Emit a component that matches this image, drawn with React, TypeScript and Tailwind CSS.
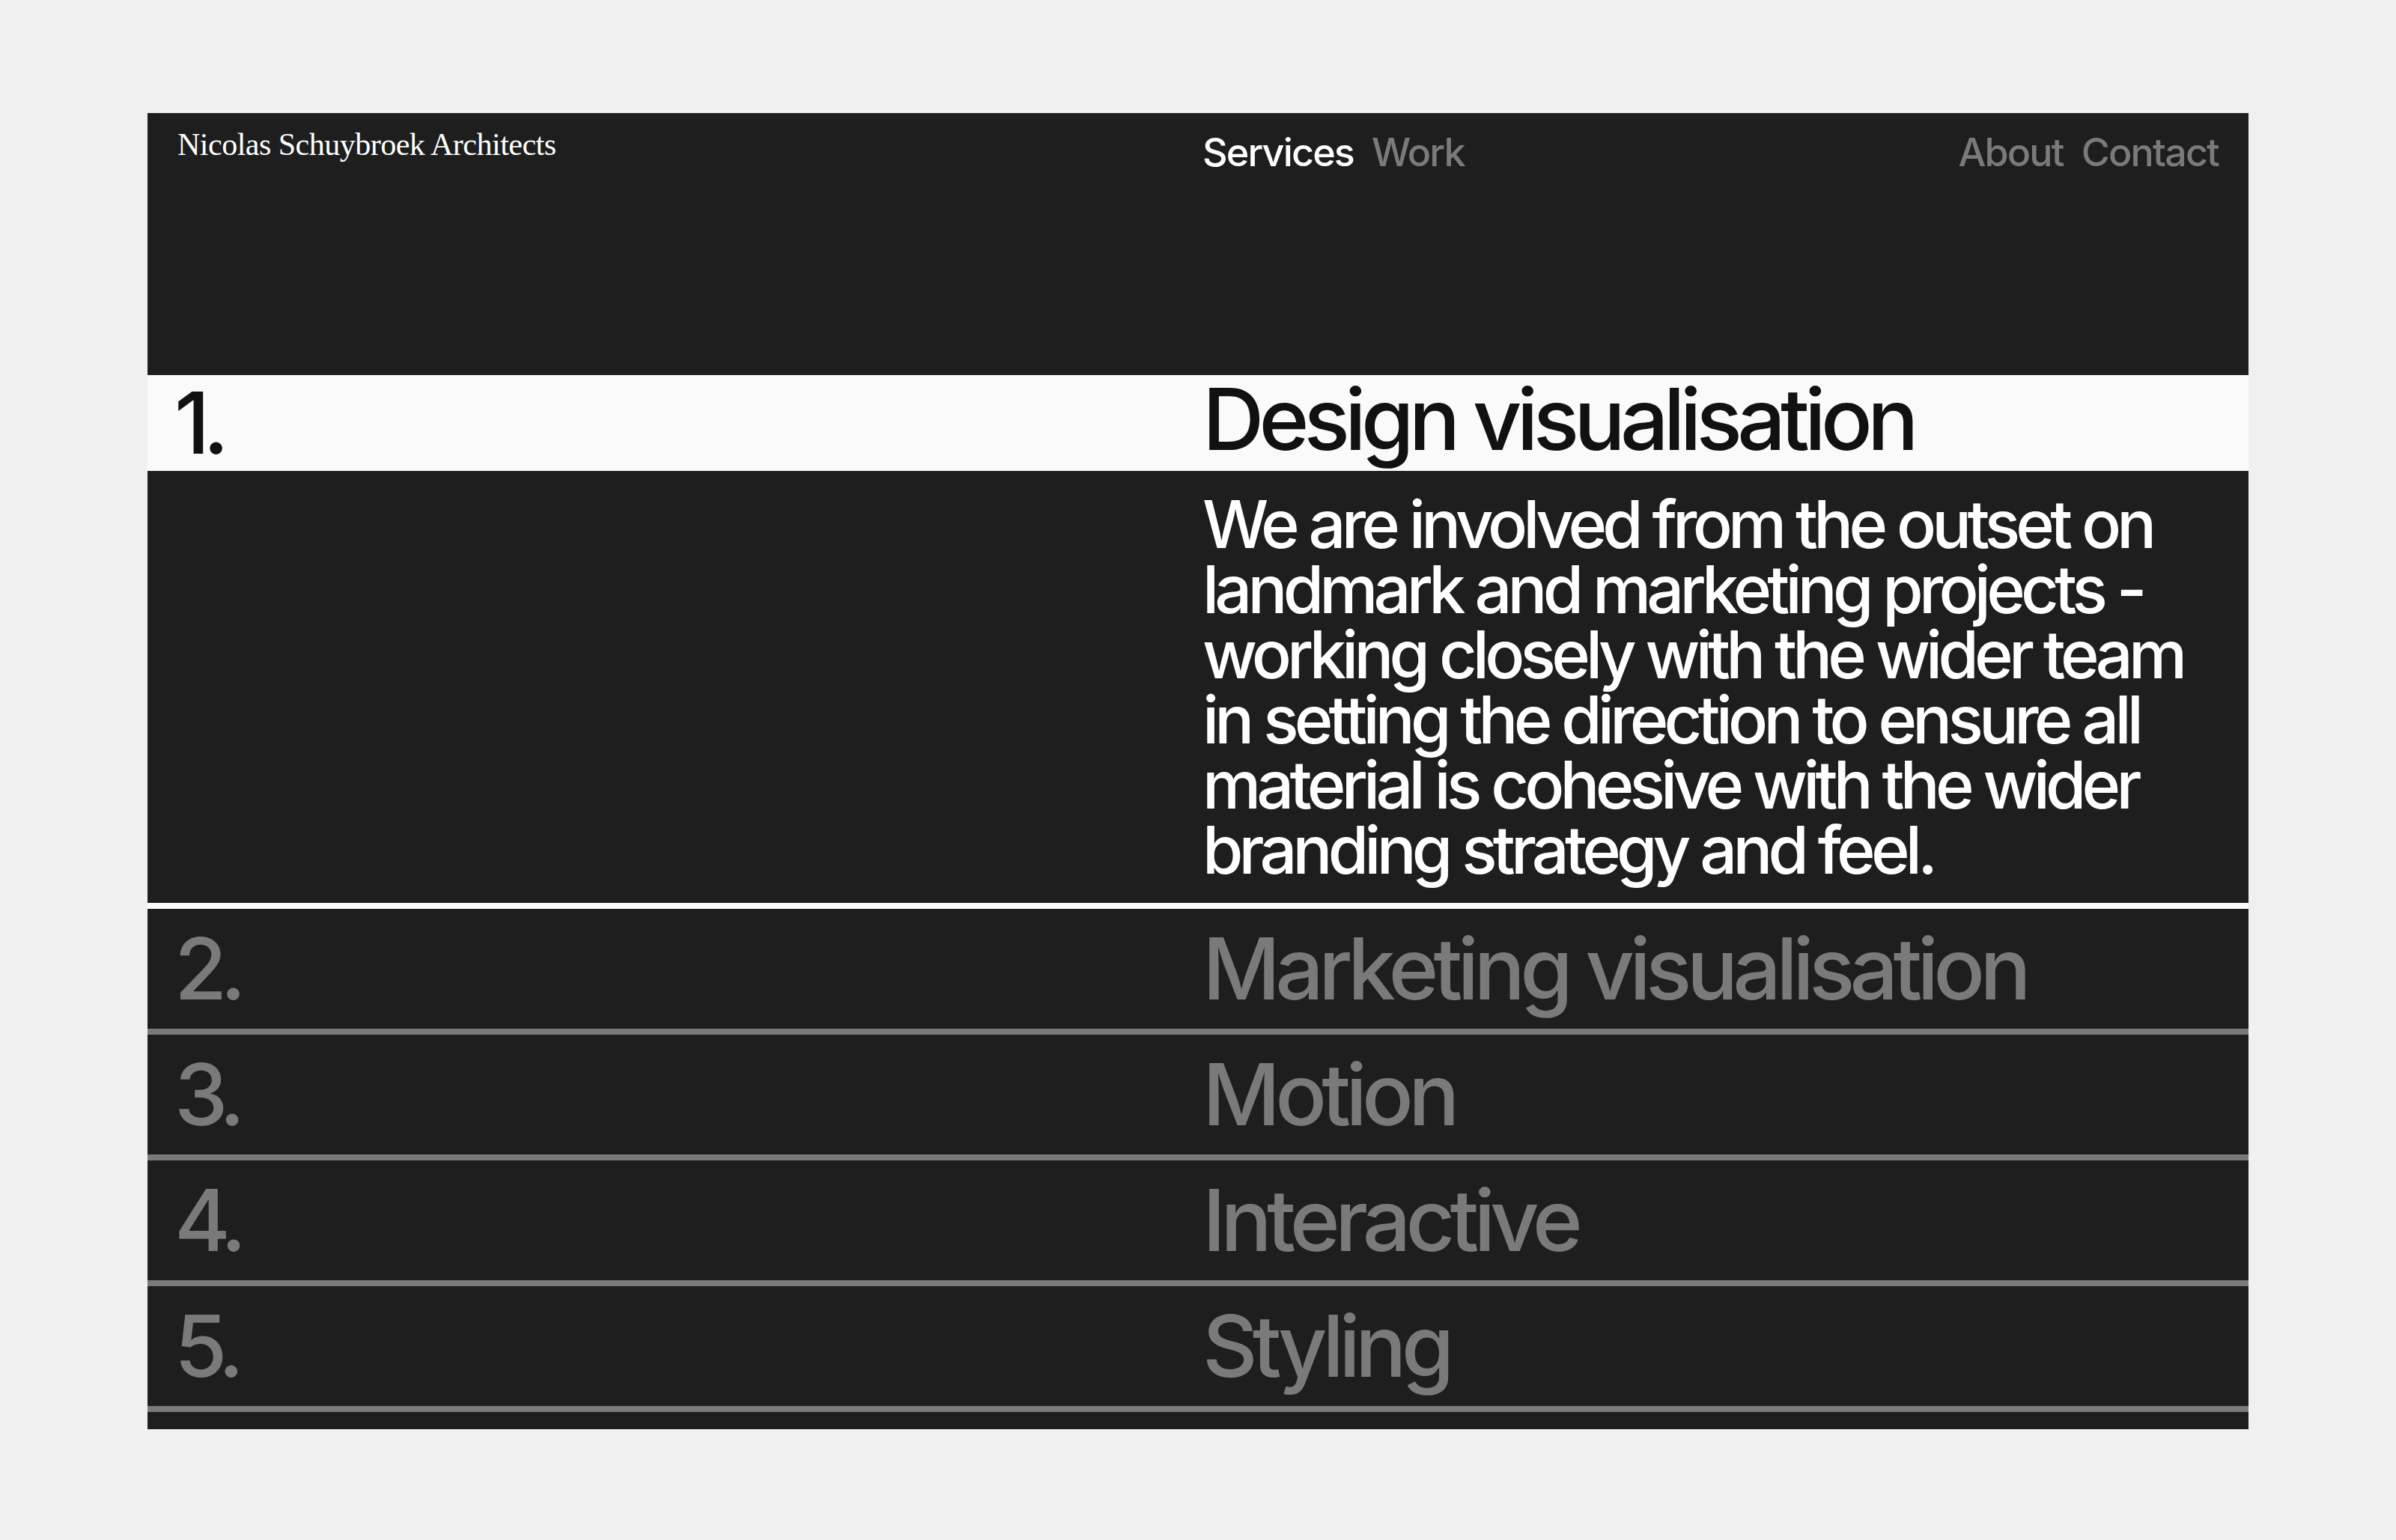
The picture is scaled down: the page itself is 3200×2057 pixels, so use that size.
const rows = [
  { num: '2.', title: 'Marketing visualisation' },
  { num: '3.', title: 'Motion' },
  { num: '4.', title: 'Interactive' },
  { num: '5.', title: 'Styling' },
]

function Header() {
  return (
    <header className="grid h-[350px] grid-cols-2 gap-x-3 px-10 pt-[21px]">
      <p className="font-['Liberation_Serif',serif] text-[42px] leading-none tracking-[-0.012em] text-white">
        Nicolas Schuybroek Architects
      </p>

      <nav className="flex items-start justify-between pt-[6px] text-[52px] font-medium leading-none tracking-[-0.035em]">
        <div className="flex gap-6">
          <a className="text-white">Services</a>
          <a className="text-[#7a7a7a]">Work</a>
        </div>

        <div className="flex gap-6 text-[#7a7a7a]">
          <a>About</a>
          <a>Contact</a>
        </div>
      </nav>
    </header>
  )
}

function ActiveService() {
  return (
    <section className="border-b-8 border-[#fafafa]">
      <div className="grid h-[128px] grid-cols-2 gap-x-3 bg-[#fafafa] px-10 text-[114px] font-medium leading-[128px] tracking-[-0.06em] text-[#111111]">
        <span className="-ml-1 tracking-[-0.08em]">1.</span>
        <h2 className="leading-[118px]">Design visualisation</h2>
      </div>

      <div className="grid grid-cols-2 gap-x-3 px-10 pb-[27px] pt-[28px]">
        <div />
        <p className="text-[88px] font-medium leading-[87px] tracking-[-0.066em] text-white">
          We are involved from the outset on landmark and marketing projects - working closely with the wider team in setting the direction to ensure all material is cohesive with the wider branding strategy and feel.
        </p>
      </div>
    </section>
  )
}

function ServiceRow({ num, title }: { num: string; title: string }) {
  return (
    <div className="grid grid-cols-2 gap-x-3 border-b-8 border-[#7a7a7a] px-10 pb-4 pt-4 text-[114px] font-medium leading-[128px] tracking-[-0.06em] text-[#7a7a7a]">
      <span className="-ml-1 tracking-[-0.08em]">{num}</span>
      <h2>{title}</h2>
    </div>
  )
}

export default function App() {
  return (
    <div className="min-h-screen bg-[#f0f0f0] px-[197px] py-[151px] font-['Inter',sans-serif]">
      <main className="bg-[#1e1e1e] pb-[23px]">
        <Header />
        <ActiveService />
        {rows.map((row) => (
          <ServiceRow key={row.num} num={row.num} title={row.title} />
        ))}
      </main>
    </div>
  )
}
